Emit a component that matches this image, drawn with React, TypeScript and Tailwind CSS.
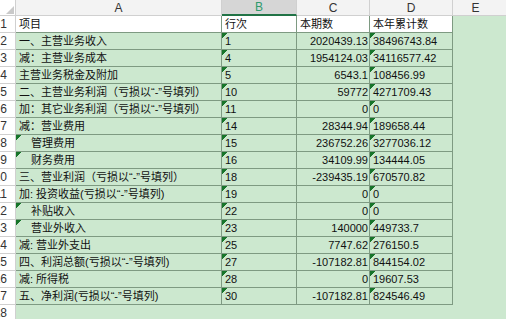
import React from "react";

type Row = {
    item: string;
    line: string;
    current: string;
    total: string;
    indent?: boolean;
};

const rows: Row[] = [
    { item: "一、主营业务收入", line: "1", current: "2020439.13", total: "38496743.84" },
    { item: "减：主营业务成本", line: "4", current: "1954124.03", total: "34116577.42" },
    { item: "主营业务税金及附加", line: "5", current: "6543.1", total: "108456.99" },
    { item: "二、主营业务利润（亏损以“-”号填列）", line: "10", current: "59772", total: "4271709.43" },
    { item: "加：其它业务利润（亏损以“-”号填列）", line: "11", current: "0", total: "0" },
    { item: "减：营业费用", line: "14", current: "28344.94", total: "189658.44" },
    { item: "管理费用", line: "15", current: "236752.26", total: "3277036.12", indent: true },
    { item: "财务费用", line: "16", current: "34109.99", total: "134444.05", indent: true },
    { item: "三、营业利润（亏损以“-”号填列）", line: "18", current: "-239435.19", total: "670570.82" },
    { item: "加: 投资收益(亏损以“-”号填列)", line: "19", current: "0", total: "0" },
    { item: "补贴收入", line: "22", current: "0", total: "0", indent: true },
    { item: "营业外收入", line: "23", current: "140000", total: "449733.7", indent: true },
    { item: "减: 营业外支出", line: "25", current: "7747.62", total: "276150.5" },
    { item: "四、利润总额(亏损以“-”号填列)", line: "27", current: "-107182.81", total: "844154.02" },
    { item: "减: 所得税", line: "28", current: "0", total: "19607.53" },
    { item: "五、净利润(亏损以“-”号填列)", line: "30", current: "-107182.81", total: "824546.49" },
];

// little green "number stored as text" marker in the cell corner
function Flag() {
    return (
        <svg className="absolute left-0 top-0" width="5" height="5" viewBox="0 0 5 5" shapeRendering="crispEdges">
            <polygon points="0,0 5,0 0,5" fill="#17752a" />
        </svg>
    );
}

function RowNum({ n }: { n: number }) {
    return (
        <div className="w-[16px] h-full shrink-0 overflow-hidden border-r border-b border-[#d0d0d0] bg-white flex items-center justify-end pr-[8px] text-[12px] text-[#333]">
            {n}
        </div>
    );
}

const cell = "h-full shrink-0 relative overflow-hidden whitespace-nowrap flex items-center border-r border-b border-[#7e9a82]";

export default function App() {
    return (
        <div
            className="w-[506px] h-[319px] overflow-hidden bg-[#cce8cf] text-[#111] text-[11px]"
            style={{ fontFamily: '"Liberation Sans", "Noto Sans CJK SC", sans-serif' }}
        >
            {/* column headers */}
            <div className="flex h-[16px] bg-[#f3f3f3] text-[12px] text-[#333]">
                <div className="w-[16px] shrink-0 relative bg-white border-r border-b border-[#d0d0d0]">
                    <svg className="absolute right-[1px] bottom-[1px]" width="8" height="8" viewBox="0 0 8 8">
                        <polygon points="8,0 8,8 0,8" fill="#c9c9c9" />
                    </svg>
                </div>
                <div className="w-[206px] shrink-0 flex items-center justify-center border-r border-b border-[#d0d0d0]">A</div>
                <div className="w-[75px] shrink-0 flex items-center justify-center border-r border-b-2 border-r-[#d0d0d0] border-b-[#217346] bg-[#d6d6d6] text-[#2f9b6c]">B</div>
                <div className="w-[73px] shrink-0 flex items-center justify-center border-r border-b border-[#d0d0d0]">C</div>
                <div className="w-[83px] shrink-0 flex items-center justify-center border-r border-b border-[#d0d0d0]">D</div>
                <div className="flex-1 flex items-center justify-center pr-[8px] border-b border-[#d0d0d0]">E</div>
            </div>

            {/* title row */}
            <div className="flex h-[17px]">
                <RowNum n={1} />
                <div className={`${cell} w-[206px] bg-white pl-[3px]`}>项目</div>
                <div className={`${cell} w-[75px] bg-white pl-[3px]`}>行次</div>
                <div className={`${cell} w-[73px] bg-white pl-[3px]`}>本期数</div>
                <div className={`${cell} w-[83px] bg-white pl-[3px]`}>本年累计数</div>
                <div className="flex-1" />
            </div>

            {rows.map((r, i) => (
                <div key={i} className="flex h-[17px]">
                    <RowNum n={i + 2} />
                    <div className={`${cell} w-[206px] ${r.indent ? "pl-[15px]" : "pl-[3px]"}`}>
                        {r.indent && <Flag />}
                        {r.item}
                    </div>
                    <div className={`${cell} w-[75px] pl-[3px]`}>
                        <Flag />
                        {r.line}
                    </div>
                    <div className={`${cell} w-[73px] justify-end pr-[1px]`}>{r.current}</div>
                    <div className={`${cell} w-[83px] pl-[3px]`}>
                        <Flag />
                        {r.total}
                    </div>
                    <div className="flex-1" />
                </div>
            ))}

            <div className="flex h-[17px]">
                <RowNum n={18} />
                <div className="flex-1" />
            </div>
        </div>
    );
}
